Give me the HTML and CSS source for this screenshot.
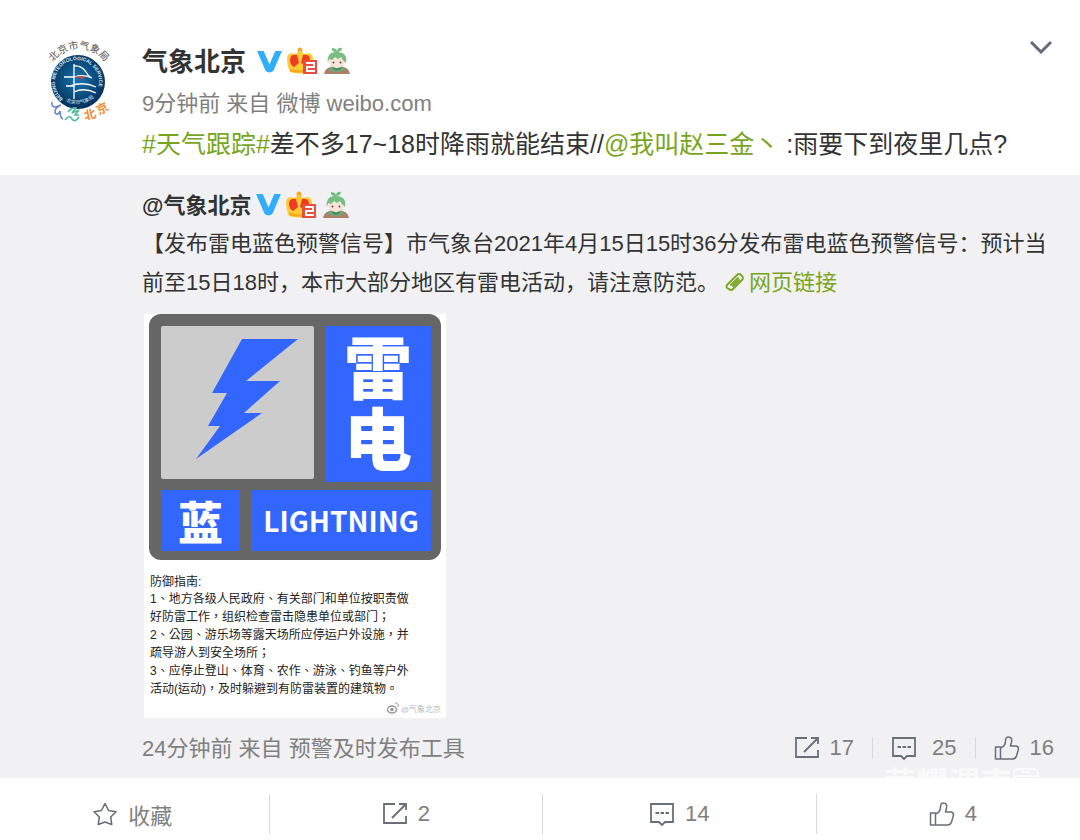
FILE: index.html
```
<!DOCTYPE html>
<html lang="zh-CN">
<head>
    <meta charset="UTF-8">
    <meta name="viewport" content="width=device-width, initial-scale=1.0">
    <title>气象北京的微博</title>
    <link rel="stylesheet" href="styles.css">
</head>
<body>
    <!-- shared icons -->
    <svg class="sprite" width="0" height="0" aria-hidden="true">
        <symbol id="icon-v" viewBox="0 0 26 24">
            <path d="M0 1h7l6 14 6-14h7l-9 21q-4 3-8 0z" fill="#32adfa"/>
        </symbol>
        <symbol id="icon-crown" viewBox="0 0 30 28">
            <circle cx="13" cy="3" r="2.500" fill="#f9a630"/>
            <path d="M13 4q3 1 4 3 9-3 9 5 0 7-3 13-10 3-20 0-3-6-3-13 0-8 9-5 1-2 4-3z" fill="#fdcb35"/>
            <path d="M10 8q-7-1-7 5 0 5 4 7l5-4zM16 8q7-1 7 5 0 4-3 6l-6-3z" fill="#ee3b25"/>
            <path d="M3 23q10 3 20 0" fill="none" stroke="#f8a51c" stroke-width="2"/>
            <path d="M16 13h14v14H16z" fill="#ea4c40"/>
            <path d="M19 16h8v4h-7v4h8" fill="none" stroke="#fff" stroke-width="2"/>
        </symbol>
        <symbol id="icon-buddy" viewBox="0 0 26 28">
            <path d="M0 27q1-6 7-7h12q6 1 7 7z" fill="#ac8068"/>
            <path d="M5 23q1-5 8-5t8 5q-8 4-16 0z" fill="#72a979"/>
            <ellipse cx="13" cy="15" rx="8" ry="6" fill="#f9e5d7"/>
            <path d="M4 16Q2 6 11 5 7 4 8 1q4 0 5 3 1-4 5-3 0 3-4 4 10 1 8 11l-3-3-2-3-3 2-3-2-3 3-3-1z" fill="#76bf84"/>
            <circle cx="9.500" cy="15.500" r="1" fill="#5b4a45"/>
            <circle cx="16.500" cy="15.500" r="1" fill="#5b4a45"/>
            <path d="M9 21l4 2 4-2" fill="none" stroke="#3f8755" stroke-width="1.500"/>
        </symbol>
        <symbol id="icon-forward" viewBox="0 0 26 24">
            <path d="M13 2H2v19h22v-7M10 16L23 3M17 2h7v6" fill="none" stroke="currentColor" stroke-width="1.800"/>
        </symbol>
        <symbol id="icon-comment" viewBox="0 0 26 24">
            <path d="M2 2h22v18h-8l-3 3-3-3H2z" fill="none" stroke="currentColor" stroke-width="1.800"/>
            <path d="M6.500 11h3.500m1.500 0h3.500m1.500 0h3.500" stroke="currentColor" stroke-width="1.800"/>
        </symbol>
        <symbol id="icon-like" viewBox="0 0 26 24">
            <path d="M1.500 11h5v12h-5zM6.500 12q5-2 5-7 0-4 3-4 4 0 3 5l-1 4h5q3 0 3 3l-2 7q-1 3-4 3h-12" fill="none" stroke="currentColor" stroke-width="1.500" stroke-linejoin="round"/>
        </symbol>
        <symbol id="icon-star" viewBox="0 0 26 24">
            <path d="M13 1.500l3.600 7 7.400 1.200-5.300 5.300 1 7.500-6.700-2.500-6.700 2.500 1-7.500L2 9.700l7.400-1.200z" fill="none" stroke="currentColor" stroke-width="1.600" stroke-linejoin="round"/>
        </symbol>
    </svg>

    <article class="post">
        <header class="post-main">
            <a href="#" class="avatar" aria-label="气象北京">
                <svg viewBox="0 0 64 84" width="64" height="84">
                    <defs>
                        <radialGradient id="globe" cx="50%" cy="45%" r="55%">
                            <stop offset="0" stop-color="#1676ae"/>
                            <stop offset="1" stop-color="#052f5c"/>
                        </radialGradient>
                        <path id="arcTop" d="M7 22A32 32 0 0 1 60 24"/>
                        <path id="arcRing" d="M17 59A22 22 0 1 1 51 51"/>
                        <path id="arcLow" d="M20 61Q33 69 49 57"/>
                    </defs>
                    <circle cx="32" cy="42" r="27" fill="url(#globe)"/>
                    <text class="avatar-top"><textPath href="#arcTop">北京市气象局</textPath></text>
                    <text class="avatar-ring"><textPath href="#arcRing">BEIJING METEOROLOGICAL SERVICE</textPath></text>
                    <text class="avatar-low"><textPath href="#arcLow">北京市气象局</textPath></text>
                    <g fill="none" stroke="#fff" stroke-width="1.300">
                        <path d="M28 24v35M18 37h10M28 26q7-1 12 6 3 5 6 6-9-4-18-1M24 46q13-5 26 1M20 46h8M28 52q10-5 22 1"/>
                    </g>
                    <path d="M29 37h6" stroke="#e43b43" stroke-width="1"/>
                    <circle cx="36" cy="37.500" r="1.700" fill="#e43b43"/>
                    <path d="M6 62q-1 5 4 5l5-2q-7 3-6 8 3 3 5-2 0 7 3 8" fill="none" stroke="#6685c5" stroke-width="1.600"/>
                    <path d="M22 72q4-5 8-4l-4 5 7-3-4 5 4 0M19 80q5-6 7-1 3 4 7-2" fill="none" stroke="#54bb9a" stroke-width="1.600"/>
                    <text class="avatar-city" x="39" y="80" transform="rotate(-13 39 80)">北</text>
                    <text class="avatar-city" x="53" y="75" transform="rotate(-28 53 75)">京</text>
                </svg>
            </a>
            <div class="post-body">
                <div class="name-row">
                    <a href="#" class="name">气象北京</a>
                    <svg class="badge-v"><use href="#icon-v"/></svg>
                    <svg class="badge-crown"><use href="#icon-crown"/></svg>
                    <svg class="badge-buddy"><use href="#icon-buddy"/></svg>
                    <button type="button" class="more" aria-label="更多">
                        <svg viewBox="0 0 24 14" width="24" height="14"><path d="M2 2l10 10L22 2" fill="none" stroke="#656b78" stroke-width="3"/></svg>
                    </button>
                </div>
                <div class="meta">9分钟前 来自 微博 weibo.com</div>
                <p class="post-text"><a href="#">#天气跟踪#</a>差不多17~18时降雨就能结束//<a href="#">@我叫赵三金丶</a> :雨要下到夜里几点?</p>
            </div>
        </header>

        <section class="repost">
            <div class="name-row">
                <a href="#" class="name">@气象北京</a>
                <svg class="badge-v"><use href="#icon-v"/></svg>
                <svg class="badge-crown"><use href="#icon-crown"/></svg>
                <svg class="badge-buddy"><use href="#icon-buddy"/></svg>
            </div>
            <p class="repost-text">【发布雷电蓝色预警信号】市气象台2021年4月15日15时36分发布雷电蓝色预警信号：预计当前至15日18时，本市大部分地区有雷电活动，请注意防范。 <a href="#"><svg class="link-icon" viewBox="0 0 20 20"><g fill="none" stroke="currentColor" stroke-width="1.800" stroke-linecap="round"><path d="M2 13L12 3q2-2 4 0l1 1q2 2 0 4L8 17q-2 2-4 0l-2-1q-1-1 0-3z"/><path d="M6 13l7-7M8 14l6-6"/></g></svg>网页链接</a></p>

            <figure class="warning">
                <div class="sign">
                    <div class="sign-top">
                        <svg class="sign-bolt" viewBox="0 0 153 153"><path d="M81 13h56L85 55h34L83 87h18l-66 46 24-33H47l19-33H51z" fill="#36f"/></svg>
                        <div class="sign-type"><span>雷</span><span>电</span></div>
                    </div>
                    <div class="sign-bottom">
                        <div class="sign-level">蓝</div>
                        <div class="sign-english">LIGHTNING</div>
                    </div>
                </div>
                <figcaption class="guide" lang="zh-TW">
                    <p class="guide-title">防御指南:</p>
                    <p>1、地方各级人民政府、有关部门和单位按职责做<br>好防雷工作，组织检查雷击隐患单位或部门；</p>
                    <p>2、公园、游乐场等露天场所应停运户外设施，并<br>疏导游人到安全场所；</p>
                    <p>3、应停止登山、体育、农作、游泳、钓鱼等户外<br>活动(运动)，及时躲避到有防雷装置的建筑物。</p>
                </figcaption>
                <div class="credit">
                    <svg viewBox="0 0 12 12" width="12" height="12"><ellipse cx="5" cy="7.500" rx="4.500" ry="3.500" fill="none" stroke="#999" stroke-width="1.500"/><circle cx="5" cy="7.500" r="1.800" fill="#999"/><path d="M8 1q4 0 3 4" fill="none" stroke="#999"/></svg>
                    <span>@气象北京</span>
                </div>
            </figure>

            <div class="repost-foot">
                <div class="meta">24分钟前 来自 预警及时发布工具</div>
                <div class="stats">
                    <button type="button"><svg class="icon"><use href="#icon-forward"/></svg>17</button>
                    <button type="button" class="stat-comment"><svg class="icon"><use href="#icon-comment"/></svg>25</button>
                    <button type="button"><svg class="icon"><use href="#icon-like"/></svg>16</button>
                </div>
            </div>
            <div class="watermark">荣耀渭南<svg viewBox="0 0 28 44" width="28" height="44"><rect x="2" y="2" width="24" height="40" rx="4" fill="none" stroke="#fafafa" stroke-width="2"/><path d="M2 9h24M2 35h24M10 5h8" stroke="#fafafa" stroke-width="2"/></svg></div>
        </section>

        <footer class="actions">
            <button type="button"><svg class="icon"><use href="#icon-star"/></svg>收藏</button>
            <button type="button"><svg class="icon"><use href="#icon-forward"/></svg>2</button>
            <button type="button"><svg class="icon"><use href="#icon-comment"/></svg>14</button>
            <button type="button"><svg class="icon"><use href="#icon-like"/></svg>4</button>
        </footer>
    </article>
</body>
</html>
```
FILE: styles.css
```
* {
    box-sizing: border-box;
}
body {
    font-family: "Liberation Sans", "Noto Sans CJK SC", sans-serif;
    background-color: #fff;
    color: #333;
    margin: 0;
}
p, figure {
    margin: 0;
}
a {
    color: #78a520;
    text-decoration: none;
}
button {
    background: none;
    border: none;
    padding: 0;
    font-family: inherit;
    font-size: 22px;
    color: #808080;
    cursor: pointer;
}
.sprite {
    position: absolute;
}
.post {
    overflow: hidden;
}
.post-main {
    display: flex;
    gap: 32px;
    padding: 40px 27px 12px 46px;
}
.avatar {
    flex: none;
    width: 64px;
    height: 84px;
}
.avatar svg {
    overflow: visible;
}
.avatar-top {
    font-size: 10px;
    fill: #555;
}
.avatar-ring {
    font-size: 5px;
    font-weight: bold;
    fill: #d5e8f5;
}
.avatar-low {
    font-size: 5px;
    fill: #d5e8f5;
}
.avatar-city {
    font-size: 12px;
    font-weight: bold;
    fill: #f08c35;
}
.post-body {
    flex: 1;
}
.name-row {
    display: flex;
    align-items: center;
    height: 42px;
}
.name {
    color: #333;
    font-size: 26px;
    font-weight: bold;
    margin-right: 11px;
    padding-bottom: 4px;
}
.badge-v {
    width: 25px;
    height: 23px;
    margin-right: 5px;
}
.badge-crown {
    width: 30px;
    height: 28px;
    margin-right: 7px;
}
.badge-buddy {
    width: 26px;
    height: 28px;
}
.more {
    margin-left: auto;
    align-self: flex-start;
    line-height: 0;
}
.meta {
    font-size: 22px;
    line-height: 43px;
    color: #808080;
}
.post-text {
    font-size: 25px;
    line-height: 38px;
}
.repost {
    position: relative;
    background-color: #f1f1f4;
    padding: 10px 20px 0 142px;
}
.repost .name-row {
    height: 39px;
}
.repost .name {
    font-size: 22px;
    margin-right: 5px;
}
.repost-text {
    font-size: 22px;
    line-height: 39px;
}
.link-icon {
    width: 20px;
    height: 20px;
    margin-right: 4px;
    vertical-align: -2px;
}

/* warning picture */
.warning {
    width: 302px;
    margin: 12px 0 0 2px;
    padding: 0 5px;
    background-color: #fff;
}
.sign {
    background-color: #666;
    border-radius: 12px;
    padding: 12px 10px 9px 12px;
    font-family: "Noto Sans CJK SC", sans-serif;
    color: #fff;
}
.sign-top, .sign-bottom {
    display: flex;
    align-items: flex-start;
    gap: 11px;
}
.sign-bottom {
    margin-top: 8px;
}
.sign-bolt {
    flex: none;
    width: 153px;
    height: 153px;
    background-color: #ccc;
    border-radius: 2px;
}
.sign-type {
    flex: 1;
    height: 156px;
    padding-top: 3px;
    background-color: #36f;
    font-size: 68px;
    font-weight: 900;
    line-height: 71px;
    text-align: center;
}
.sign-type span {
    display: block;
}
.sign-level, .sign-english {
    background-color: #36f;
    height: 61px;
    line-height: 61px;
    text-align: center;
    font-weight: 900;
}
.sign-level {
    flex: none;
    width: 79px;
    font-size: 45px;
}
.sign-english {
    flex: 1;
    font-size: 28px;
    font-weight: bold;
}
.guide {
    padding: 14px 0 0 1px;
    font-family: "Liberation Sans", "Noto Sans CJK TC", sans-serif;
    font-size: 12px;
    line-height: 18px;
    color: #222;
    white-space: nowrap;
}
.guide-title {
    line-height: 16px;
}
.credit {
    display: flex;
    align-items: center;
    justify-content: flex-end;
    gap: 2px;
    height: 20px;
    font-size: 8px;
    color: #bbb;
}

.repost-foot {
    display: flex;
    align-items: center;
    justify-content: space-between;
    height: 60px;
    padding-right: 6px;
}
.stats {
    display: flex;
}
.stats button {
    display: flex;
    align-items: center;
    gap: 10px;
    height: 22px;
    padding-left: 18px;
}
.stats .stat-comment {
    gap: 15px;
}
.stats button + button {
    margin-left: 18px;
    border-left: 1px solid #d9d9dc;
}
.icon {
    flex: none;
    width: 26px;
    height: 24px;
    color: #696e78;
}
/* faint stamp, only its top edge shows */
.watermark {
    position: absolute;
    right: 40px;
    bottom: 0;
    height: 11px;
    overflow: hidden;
    display: flex;
    font-size: 32px;
    font-weight: bold;
    line-height: 34px;
    color: #fafafa;
    pointer-events: none;
}
.actions {
    display: flex;
    margin: 0 -10px 0 -4px;
    padding: 16px 0 6px;
}
.actions button {
    flex: 1;
    display: flex;
    align-items: center;
    justify-content: center;
    gap: 10px;
    height: 40px;
    border-right: 1px solid #d9d9d9;
}
```
